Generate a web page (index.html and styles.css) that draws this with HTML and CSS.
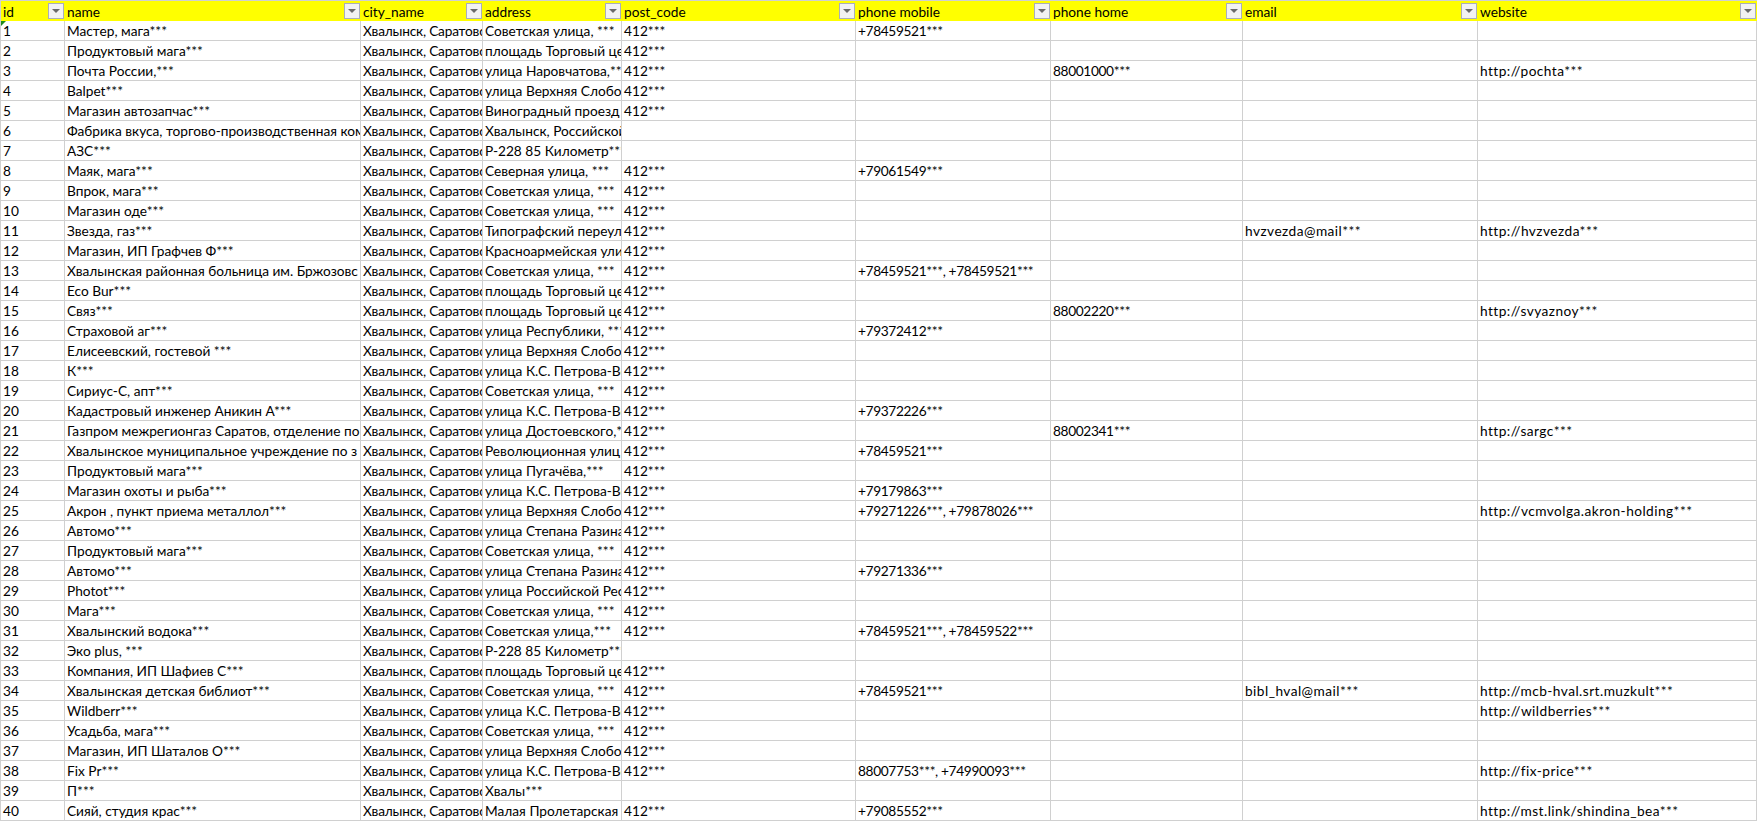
FILE: index.html
```html
<!DOCTYPE html>
<html lang="ru">
<head>
  <meta charset="UTF-8">
  <meta name="viewport" content="width=device-width, initial-scale=1.0">
  <title>Хвалынск</title>
  <link rel="stylesheet" href="styles.css">
</head>
<body>
  <table class="sheet">
    <colgroup>
      <col class="col-id">
      <col class="col-name">
      <col class="col-city">
      <col class="col-address">
      <col class="col-post">
      <col class="col-mobile">
      <col class="col-home">
      <col class="col-email">
      <col class="col-website">
    </colgroup>
    <thead>
      <tr>
        <th><div class="head-cell"><span>id</span><span class="filter-btn"></span></div></th>
        <th><div class="head-cell"><span>name</span><span class="filter-btn"></span></div></th>
        <th><div class="head-cell"><span>city_name</span><span class="filter-btn"></span></div></th>
        <th><div class="head-cell"><span>address</span><span class="filter-btn"></span></div></th>
        <th><div class="head-cell"><span>post_code</span><span class="filter-btn"></span></div></th>
        <th><div class="head-cell"><span>phone mobile</span><span class="filter-btn"></span></div></th>
        <th><div class="head-cell"><span>phone home</span><span class="filter-btn"></span></div></th>
        <th><div class="head-cell"><span>email</span><span class="filter-btn"></span></div></th>
        <th><div class="head-cell"><span>website</span><span class="filter-btn"></span></div></th>
      </tr>
    </thead>
    <tbody>
      <tr><td class="has-mark">1</td><td>Мастер, мага***</td><td>Хвалынск, Саратовс</td><td>Советская улица, ***</td><td>412***</td><td>+78459521***</td><td></td><td></td><td></td></tr>
      <tr><td>2</td><td>Продуктовый мага***</td><td>Хвалынск, Саратовс</td><td>площадь Торговый це</td><td>412***</td><td></td><td></td><td></td><td></td></tr>
      <tr><td>3</td><td>Почта России,***</td><td>Хвалынск, Саратовс</td><td>улица Наровчатова,***</td><td>412***</td><td></td><td>88001000***</td><td></td><td>http://pochta***</td></tr>
      <tr><td>4</td><td>Balpet***</td><td>Хвалынск, Саратовс</td><td>улица Верхняя Слобо</td><td>412***</td><td></td><td></td><td></td><td></td></tr>
      <tr><td>5</td><td>Магазин автозапчас***</td><td>Хвалынск, Саратовс</td><td>Виноградный проезд</td><td>412***</td><td></td><td></td><td></td><td></td></tr>
      <tr><td>6</td><td>Фабрика вкуса, торгово-производственная ком</td><td>Хвалынск, Саратовс</td><td>Хвалынск, Российской</td><td></td><td></td><td></td><td></td><td></td></tr>
      <tr><td>7</td><td>АЗС***</td><td>Хвалынск, Саратовс</td><td>Р-228 85 Километр***</td><td></td><td></td><td></td><td></td><td></td></tr>
      <tr><td>8</td><td>Маяк, мага***</td><td>Хвалынск, Саратовс</td><td>Северная улица, ***</td><td>412***</td><td>+79061549***</td><td></td><td></td><td></td></tr>
      <tr><td>9</td><td>Впрок, мага***</td><td>Хвалынск, Саратовс</td><td>Советская улица, ***</td><td>412***</td><td></td><td></td><td></td><td></td></tr>
      <tr><td>10</td><td>Магазин оде***</td><td>Хвалынск, Саратовс</td><td>Советская улица, ***</td><td>412***</td><td></td><td></td><td></td><td></td></tr>
      <tr><td>11</td><td>Звезда, газ***</td><td>Хвалынск, Саратовс</td><td>Типографский переул</td><td>412***</td><td></td><td></td><td>hvzvezda@mail***</td><td>http://hvzvezda***</td></tr>
      <tr><td>12</td><td>Магазин, ИП Графчев Ф***</td><td>Хвалынск, Саратовс</td><td>Красноармейская ули</td><td>412***</td><td></td><td></td><td></td><td></td></tr>
      <tr><td>13</td><td>Хвалынская районная больница им. Бржозовс</td><td>Хвалынск, Саратовс</td><td>Советская улица, ***</td><td>412***</td><td>+78459521***, +78459521***</td><td></td><td></td><td></td></tr>
      <tr><td>14</td><td>Eco Bur***</td><td>Хвалынск, Саратовс</td><td>площадь Торговый це</td><td>412***</td><td></td><td></td><td></td><td></td></tr>
      <tr><td>15</td><td>Связ***</td><td>Хвалынск, Саратовс</td><td>площадь Торговый це</td><td>412***</td><td></td><td>88002220***</td><td></td><td>http://svyaznoy***</td></tr>
      <tr><td>16</td><td>Страховой аг***</td><td>Хвалынск, Саратовс</td><td>улица Республики, ***</td><td>412***</td><td>+79372412***</td><td></td><td></td><td></td></tr>
      <tr><td>17</td><td>Елисеевский, гостевой ***</td><td>Хвалынск, Саратовс</td><td>улица Верхняя Слобо</td><td>412***</td><td></td><td></td><td></td><td></td></tr>
      <tr><td>18</td><td>К***</td><td>Хвалынск, Саратовс</td><td>улица К.С. Петрова-Во</td><td>412***</td><td></td><td></td><td></td><td></td></tr>
      <tr><td>19</td><td>Сириус-С, апт***</td><td>Хвалынск, Саратовс</td><td>Советская улица, ***</td><td>412***</td><td></td><td></td><td></td><td></td></tr>
      <tr><td>20</td><td>Кадастровый инженер Аникин А***</td><td>Хвалынск, Саратовс</td><td>улица К.С. Петрова-Во</td><td>412***</td><td>+79372226***</td><td></td><td></td><td></td></tr>
      <tr><td>21</td><td>Газпром межрегионгаз Саратов, отделение по</td><td>Хвалынск, Саратовс</td><td>улица Достоевского,***</td><td>412***</td><td></td><td>88002341***</td><td></td><td>http://sargc***</td></tr>
      <tr><td>22</td><td>Хвалынское муниципальное учреждение по з</td><td>Хвалынск, Саратовс</td><td>Революционная улиц</td><td>412***</td><td>+78459521***</td><td></td><td></td><td></td></tr>
      <tr><td>23</td><td>Продуктовый мага***</td><td>Хвалынск, Саратовс</td><td>улица Пугачёва,***</td><td>412***</td><td></td><td></td><td></td><td></td></tr>
      <tr><td>24</td><td>Магазин охоты и рыба***</td><td>Хвалынск, Саратовс</td><td>улица К.С. Петрова-Во</td><td>412***</td><td>+79179863***</td><td></td><td></td><td></td></tr>
      <tr><td>25</td><td>Акрон , пункт приема металлол***</td><td>Хвалынск, Саратовс</td><td>улица Верхняя Слобо</td><td>412***</td><td>+79271226***, +79878026***</td><td></td><td></td><td>http://vcmvolga.akron-holding***</td></tr>
      <tr><td>26</td><td>Автомо***</td><td>Хвалынск, Саратовс</td><td>улица Степана Разина</td><td>412***</td><td></td><td></td><td></td><td></td></tr>
      <tr><td>27</td><td>Продуктовый мага***</td><td>Хвалынск, Саратовс</td><td>Советская улица, ***</td><td>412***</td><td></td><td></td><td></td><td></td></tr>
      <tr><td>28</td><td>Автомо***</td><td>Хвалынск, Саратовс</td><td>улица Степана Разина</td><td>412***</td><td>+79271336***</td><td></td><td></td><td></td></tr>
      <tr><td>29</td><td>Photot***</td><td>Хвалынск, Саратовс</td><td>улица Российской Рес</td><td>412***</td><td></td><td></td><td></td><td></td></tr>
      <tr><td>30</td><td>Мага***</td><td>Хвалынск, Саратовс</td><td>Советская улица, ***</td><td>412***</td><td></td><td></td><td></td><td></td></tr>
      <tr><td>31</td><td>Хвалынский водока***</td><td>Хвалынск, Саратовс</td><td>Советская улица,***</td><td>412***</td><td>+78459521***, +78459522***</td><td></td><td></td><td></td></tr>
      <tr><td>32</td><td>Эко plus, ***</td><td>Хвалынск, Саратовс</td><td>Р-228 85 Километр***</td><td></td><td></td><td></td><td></td><td></td></tr>
      <tr><td>33</td><td>Компания, ИП Шафиев С***</td><td>Хвалынск, Саратовс</td><td>площадь Торговый це</td><td>412***</td><td></td><td></td><td></td><td></td></tr>
      <tr><td>34</td><td>Хвалынская детская библиот***</td><td>Хвалынск, Саратовс</td><td>Советская улица, ***</td><td>412***</td><td>+78459521***</td><td></td><td>bibl_hval@mail***</td><td>http://mcb-hval.srt.muzkult***</td></tr>
      <tr><td>35</td><td>Wildberr***</td><td>Хвалынск, Саратовс</td><td>улица К.С. Петрова-Во</td><td>412***</td><td></td><td></td><td></td><td>http://wildberries***</td></tr>
      <tr><td>36</td><td>Усадьба, мага***</td><td>Хвалынск, Саратовс</td><td>Советская улица, ***</td><td>412***</td><td></td><td></td><td></td><td></td></tr>
      <tr><td>37</td><td>Магазин, ИП Шаталов О***</td><td>Хвалынск, Саратовс</td><td>улица Верхняя Слобо</td><td>412***</td><td></td><td></td><td></td><td></td></tr>
      <tr><td>38</td><td>Fix Pr***</td><td>Хвалынск, Саратовс</td><td>улица К.С. Петрова-Во</td><td>412***</td><td>88007753***, +74990093***</td><td></td><td></td><td>http://fix-price***</td></tr>
      <tr><td>39</td><td>П***</td><td>Хвалынск, Саратовс</td><td>Хвалы***</td><td></td><td></td><td></td><td></td><td></td></tr>
      <tr><td>40</td><td>Сияй, студия крас***</td><td>Хвалынск, Саратовс</td><td>Малая Пролетарская</td><td>412***</td><td>+79085552***</td><td></td><td></td><td>http://mst.link/shindina_bea***</td></tr>
    </tbody>
  </table>
</body>
</html>
```

FILE: styles.css
```css
:root {
  --grid: #d0d0d0;
  --head: #ffff00;
}

body {
  margin: 0;
  background: #ffffff;
  font-family: Lato, "Open Sans", sans-serif;
  font-size: 13.7px;
  color: #000000;
  overflow: hidden;
}

.sheet {
  width: 1757px;
  table-layout: fixed;
  border-collapse: separate;
  border-spacing: 0;
  border-top: 1px solid var(--grid);
  border-left: 1px solid var(--grid);
}

.col-id { width: 64px; }
.col-name { width: 296px; }
.col-city { width: 122px; }
.col-address { width: 139px; }
.col-post { width: 234px; }
.col-mobile { width: 195px; }
.col-home { width: 192px; }
.col-email { width: 235px; }
.col-website { width: 279px; }

th {
  height: 20px;
  padding: 0;
  background: var(--head);
  font-weight: 400;
  text-align: left;
}

.head-cell {
  display: flex;
  align-items: center;
  justify-content: space-between;
  height: 20px;
  padding-left: 2px;
  padding-right: 1px;
}

.filter-btn {
  display: flex;
  align-items: center;
  justify-content: center;
  box-sizing: border-box;
  width: 16px;
  height: 16px;
  background: #f2f2f2;
  border: 1px solid #a9aebb;
}

.filter-btn::after {
  content: "";
  border-top: 4px solid #6a6a6a;
  border-left: 4px solid transparent;
  border-right: 4px solid transparent;
}

td {
  box-sizing: border-box;
  height: 20px;
  padding: 1px 0 0 2px;
  line-height: 18px;
  white-space: nowrap;
  overflow: hidden;
  border-right: 1px solid var(--grid);
  border-bottom: 1px solid var(--grid);
}

/* city text has to stop right at the column edge */
td:nth-child(3) {
  letter-spacing: -0.2px;
}

/* Lato digits run wider than the sheet font, latin runs narrower */
td:nth-child(6),
td:nth-child(7) {
  letter-spacing: -0.35px;
}

td:nth-child(8),
td:nth-child(9) {
  letter-spacing: 0.45px;
}

.has-mark {
  position: relative;
}

/* green error corner on the first cell */
.has-mark::before {
  content: "";
  position: absolute;
  top: 0;
  left: 0;
  border-top: 5px solid #1e8a1e;
  border-right: 5px solid transparent;
}
```
